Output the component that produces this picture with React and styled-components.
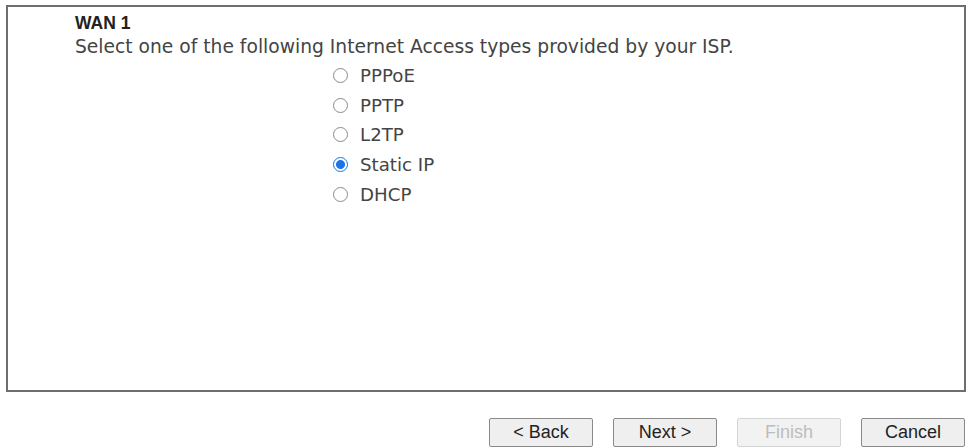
import styled, { createGlobalStyle } from 'styled-components'

const GlobalStyle = createGlobalStyle`
  html, body {
    margin: 0;
    padding: 0;
    background: #fff;
  }
`

const options = ['PPPoE', 'PPTP', 'L2TP', 'Static IP', 'DHCP']

export default function App() {
  return (
    <StyledPage>
      <GlobalStyle />
      <StyledPanel>
        <StyledTitle>WAN 1</StyledTitle>
        <StyledIntro>Select one of the following Internet Access types provided by your ISP.</StyledIntro>
        <StyledOptionList>
          {options.map(label => (
            <StyledOption key={label}>
              <StyledRadio checked={label === 'Static IP'} />
              <span>{label}</span>
            </StyledOption>
          ))}
        </StyledOptionList>
      </StyledPanel>
      <StyledButtonBar>
        <StyledButton>&lt; Back</StyledButton>
        <StyledButton>Next &gt;</StyledButton>
        <StyledButton disabled>Finish</StyledButton>
        <StyledButton>Cancel</StyledButton>
      </StyledButtonBar>
    </StyledPage>
  )
}

const StyledPage = styled.div`
  width: 970px;
  height: 448px;
  padding: 5px 4px 0 6px;
  box-sizing: border-box;
  display: flex;
  flex-direction: column;
  font-family: 'DejaVu Sans', Verdana, sans-serif;
  color: #333;
`

const StyledPanel = styled.div`
  height: 387px;
  box-sizing: border-box;
  border: 2px solid #6e6e6e;
  padding: 6px 0 0 67px;
`

const StyledTitle = styled.div`
  font-family: 'Liberation Sans', Arial, sans-serif;
  font-weight: bold;
  font-size: 17.5px;
  line-height: 20px;
  color: #222;
`

const StyledIntro = styled.div`
  margin-top: 3px;
  font-size: 18.7px;
  line-height: 22px;
  color: #444;
`

const StyledOptionList = styled.div`
  display: flex;
  flex-direction: column;
  margin-top: 3px;
  padding-left: 258px;
`

const StyledOption = styled.label`
  display: flex;
  align-items: center;
  gap: 12px;
  height: 29.6px;
  font-size: 18.2px;
  color: #444;
`

const StyledRadio = styled.span`
  width: 15px;
  height: 15px;
  border-radius: 50%;
  box-sizing: border-box;
  border: 1px solid ${({ checked }) => (checked ? '#1a73e8' : '#8a8a8a')};
  background: ${({ checked }) => (checked ? 'radial-gradient(circle, #1a73e8 0 4px, #fff 5px)' : '#fff')};
`

const StyledButtonBar = styled.div`
  display: flex;
  justify-content: flex-end;
  gap: 20px;
  margin-top: 26px;
  padding-right: 1px;
`

const StyledButton = styled.button`
  width: 104px;
  height: 29px;
  box-sizing: border-box;
  border: 1px solid ${({ disabled }) => (disabled ? '#d4d4d4' : '#8a8a8a')};
  border-radius: 2px;
  background: ${({ disabled }) => (disabled ? '#f2f2f2' : '#efefef')};
  color: ${({ disabled }) => (disabled ? '#bdbdbd' : '#222')};
  font-family: 'Liberation Sans', Arial, sans-serif;
  font-size: 18px;
  padding: 0;
`
